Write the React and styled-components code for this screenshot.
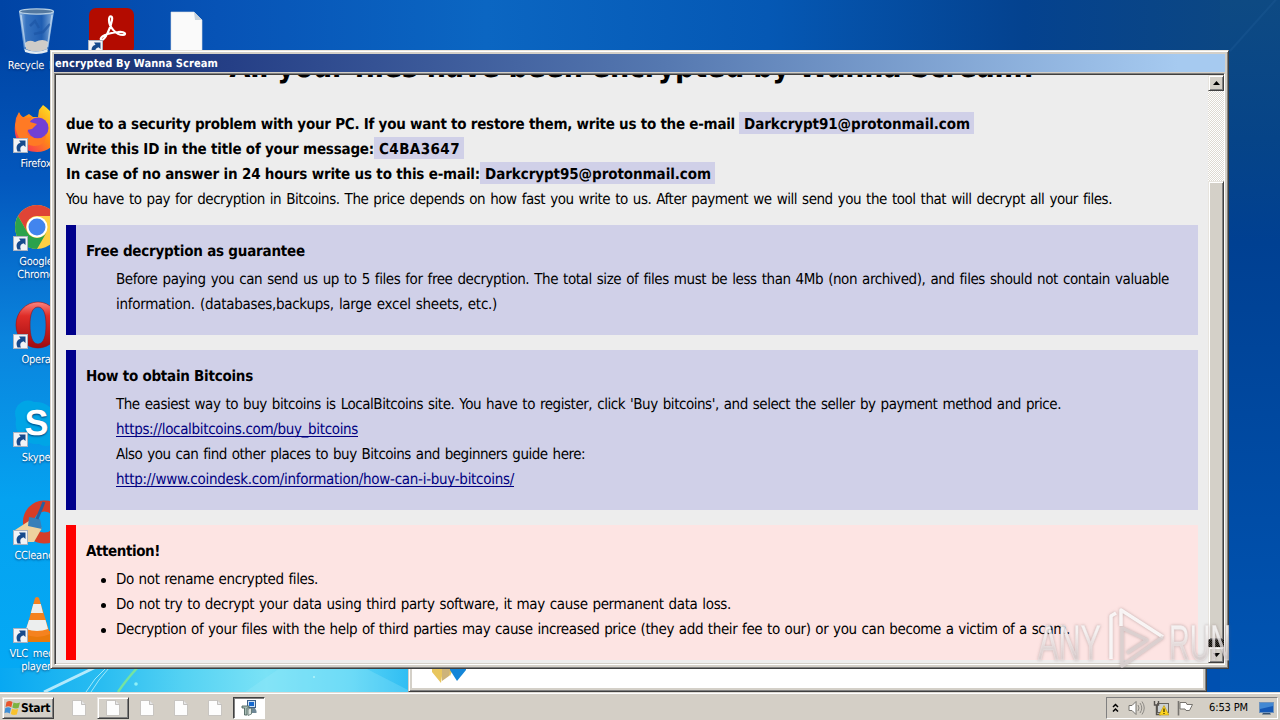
import React, { useLayoutEffect, useRef } from "react";
import styled, { createGlobalStyle, css } from "styled-components";

const Global = createGlobalStyle`
  * { box-sizing: border-box; }
  body { margin: 0; overflow: hidden; }
  ul, p, h1, h2 { margin: 0; padding: 0; }
`;

const ui = `"DejaVu Sans Condensed", "DejaVu Sans", sans-serif`;

const Desktop = styled.div`
  position: relative;
  width: 1280px;
  height: 720px;
  display: flex;
  flex-direction: column;
  overflow: hidden;
  font-family: ${ui};
  font-stretch: condensed;
  text-rendering: geometricPrecision;
  background: #0050b0;
`;

const Workspace = styled.main`
  position: relative;
  flex: 1;
  overflow: hidden;
`;

const Wallpaper = styled.svg`
  position: absolute;
  inset: 0;
`;

const IconColumns = styled.div`
  position: relative;
  display: flex;
  padding-top: 7px;
`;

const IconColumn = styled.div`
  width: 75px;
  padding-right: 3px;
  display: flex;
  flex-direction: column;
`;

const Shortcut = styled.div`
  height: 98px;
  display: flex;
  flex-direction: column;
  align-items: center;
  gap: 4px;
  color: #fff;
  font-size: 11px;
  line-height: 13px;
  text-align: center;
  white-space: pre;
  letter-spacing: -0.25px;
  word-spacing: 2px;
  text-shadow: 0 1px 2px rgba(0, 20, 70, 0.7);
  svg { flex: none; display: block; }
`;

const frame = css`
  border: 1px solid;
  border-color: #e8e4dc #404040 #404040 #d4d0c8;
  box-shadow: inset 1px 1px #fff, inset -1px -1px #808080;
  background: #d4d0c8;
`;

const BackWindow = styled.section`
  ${frame}
  position: absolute;
  left: 408px;
  top: 560px;
  width: 799px;
  height: 132px;
  padding: 3px;
  display: flex;
`;

const BackBody = styled.div`
  flex: 1;
  background: #fff;
  display: flex;
  align-items: flex-end;
  padding: 0 0 5px 20px;
`;

const MainWindow = styled.section`
  ${frame}
  position: absolute;
  left: 50px;
  top: 50px;
  width: 1179px;
  height: 619px;
  padding: 3px;
  display: flex;
  flex-direction: column;
`;

const TitleBar = styled.header`
  height: 18px;
  flex: none;
  padding: 1px 0 0 1px;
  display: flex;
  align-items: center;
  background: linear-gradient(90deg, #15306f, #253f86 15%, #5578b0 52%, #a6caf0 96%);
  color: #fff;
  font-size: 11px;
  font-weight: 700;
  line-height: 18px;
`;

const Client = styled.div`
  flex: 1;
  min-height: 0;
  margin-top: 1px;
  display: flex;
  border: 1px solid;
  border-color: #808080 #fff #fff #808080;
  box-shadow: inset 1px 1px #404040, inset -1px -1px #d4d0c8;
  padding: 1px 0 1px 1px;
`;

const Page = styled.article`
  flex: 1;
  overflow: hidden;
  background: #ededed;
  padding: 0 10px;
  color: #000;
  font-size: 15px;
  line-height: 25px;
`;

const Heading = styled.h1`
  height: 36px;
  margin-top: -25px;
  text-align: center;
  font-size: 30px;
  line-height: 36px;
`;

const Intro = styled.div`
  margin: 26px 0 -2px;
`;

const Line = styled.p`
  height: 25px;
  display: flex;
  align-items: center;
  white-space: nowrap;
  font-weight: ${(p) => (p.$bold ? 700 : 400)};
  word-spacing: ${(p) => (p.$bold ? 0 : 1.2)}px;
`;

const Mark = styled.span`
  height: 22px;
  line-height: 24px;
  padding: 0 4px 0 5px;
  margin: -3px 0 0 ${(p) => p.$gap || 0}px;
  background: #d0d0e8;
`;

const Notice = styled.section`
  height: ${(p) => p.$height}px;
  margin-top: 15px;
  padding: 14px 10px 0;
  border-left: 10px solid ${(p) => (p.$alert ? "#f00" : "#00008b")};
  background: ${(p) => (p.$alert ? "#fde4e3" : "#d0d0e8")};
`;

const NoticeTitle = styled.h2`
  height: 28px;
  font-size: 15px;
  line-height: 25px;
`;

const NoticeBody = styled.div`
  padding-left: 30px;
`;

const Bullets = styled.ul`
  list-style: none;
  padding-left: 15px;
`;

const Bullet = styled.li`
  height: 25px;
  display: flex;
  align-items: center;
  gap: 10px;
  word-spacing: 0.8px;
  &::before {
    content: "";
    width: 5px;
    height: 5px;
    margin-top: 2px;
    border-radius: 50%;
    background: #000;
  }
`;

const Fitted = styled.span`
  display: inline-block;
  white-space: pre;
`;

const Link = styled.a`
  color: #000080;
  ${Fitted} {
    text-decoration: underline;
    text-underline-offset: 2px;
    text-decoration-thickness: 1px;
    text-decoration-skip-ink: none;
  }
`;

/* Spreads a run of text over a fixed advance by adjusting its tracking. */
function Fit({ w, children }) {
  const ref = useRef(null);
  useLayoutEffect(() => {
    const el = ref.current;
    el.style.letterSpacing = "0px";
    const natural = el.getBoundingClientRect().width;
    el.style.letterSpacing = `${(w - natural) / el.textContent.length}px`;
  }, [w, children]);
  return <Fitted ref={ref}>{children}</Fitted>;
}

const ScrollBar = styled.div`
  width: 16px;
  display: flex;
  flex-direction: column;
  background: repeating-conic-gradient(#fff 0 25%, #dedad2 0 50%) 0 0 / 2px 2px;
`;

const bevel = css`
  border: 1px solid;
  border-color: #e8e5df #404040 #404040 #e8e5df;
  box-shadow: inset 1px 1px #fff, inset -1px -1px #808080;
  background: #d4d0c8;
`;

const ScrollButton = styled.div`
  ${bevel}
  height: 16px;
  flex: none;
  display: flex;
  align-items: center;
  justify-content: center;
`;

const ScrollGap = styled.div`
  height: 90px;
  flex: none;
`;

const Thumb = styled.div`
  ${bevel}
  flex: 1;
`;

const Pressed = styled.div`
  height: 7px;
  flex: none;
  background: repeating-conic-gradient(#000 0 25%, #3b382f 0 50%) 0 0 / 2px 2px;
`;

const Taskbar = styled.footer`
  height: 28px;
  flex: none;
  display: flex;
  align-items: center;
  padding: 2px 0 0 2px;
  background: #d4cfc6;
  border-top: 1px solid #dedbd5;
  box-shadow: inset 0 1px #fff;
  color: #000;
`;

const StartButton = styled.div`
  ${bevel}
  width: 52px;
  height: 22px;
  padding-left: 1px;
  display: flex;
  align-items: center;
  font-size: 12px;
  font-weight: 700;
`;

const Tasks = styled.nav`
  flex: 1;
  display: flex;
  gap: 2px;
  padding-left: 9px;
`;

const Task = styled.div`
  width: 32px;
  height: 22px;
  display: flex;
  align-items: center;
  justify-content: center;
  ${(p) => p.$state === "raised" && bevel}
  ${(p) =>
    p.$state === "active" &&
    css`
      border: 1px solid;
      border-color: #404040 #fff #fff #404040;
      box-shadow: inset 1px 1px #808080;
      background: #fff;
    `}
`;

const Tray = styled.div`
  width: 172px;
  height: 22px;
  margin-right: 2px;
  padding: 0 1px 0 4px;
  display: flex;
  align-items: center;
  border: 1px solid;
  border-color: #808080 #fff #fff #808080;
`;

const TrayIcons = styled.div`
  display: flex;
  align-items: center;
  gap: 8px;
  svg { display: block; }
`;

const Clock = styled.span`
  margin: 0 11px 0 15px;
  font-size: 11px;
`;

const Watermark = styled.div`
  position: absolute;
  left: 1038px;
  top: 606px;
  width: 194px;
  height: 66px;
  svg { display: block; filter: drop-shadow(0 0 1.5px rgba(120, 100, 100, 0.55)); }
`;

const Arrow = () => (
  <g>
    <rect x="1.5" y="33.5" width="14" height="14" fill="#f2f3f6" stroke="#aab2c0" />
    <path d="M5.500 46.500C3.500 42 5 38.500 8.500 37.800L7 35.500H13.500V42L11.500 40.200C8.500 41 7.500 43.500 9 46.500Z" fill="#174a8c" />
  </g>
);

const Icon = ({ children, arrow = true }) => (
  <svg width="48" height="48" viewBox="0 0 48 48" overflow="visible">
    {children}
    {arrow && <Arrow />}
  </svg>
);

const RecycleBin = () => (
  <Icon arrow={false}>
    <defs>
      <linearGradient id="bin">
        <stop offset="0" stopColor="#b9d5ef" stopOpacity=".9" />
        <stop offset=".2" stopColor="#4a83c8" stopOpacity=".75" />
        <stop offset=".65" stopColor="#2c67b5" stopOpacity=".7" />
        <stop offset="1" stopColor="#a9cbec" stopOpacity=".9" />
      </linearGradient>
    </defs>
    <path d="M7 4L12 43Q24 50 36 43L42 4Z" fill="url(#bin)" />
    <path d="M13 36Q17 32 23 35Q31 31 36 35L35 42Q24 47 14 42Z" fill="#cfccc8" />
    <path d="M12.500 42Q24 47 35.500 42V45Q24 49 13 45Z" fill="#e3ecf2" />
    <path d="M18 19L23 14L27 21M38 17L31 25L22 27" fill="none" stroke="#1d56a5" strokeWidth="2.500" opacity=".7" />
    <ellipse cx="24.500" cy="4.500" rx="17" ry="2.600" fill="#53789f" stroke="#b4cde2" strokeWidth="1.200" />
    <path d="M9 8L13.500 40M40 8L35.500 40" stroke="#d9eaf8" strokeWidth="1.500" opacity=".6" />
  </Icon>
);

const Acrobat = () => (
  <Icon>
    <rect x="2" y="1" width="45" height="46" rx="7" fill="#b30b00" />
    <path
      d="M14 33C12 30 20 26 31 25C38 24 40 28 36 28C29 28 22 20 22 13C22 8 26 8 25 13C24 20 18 34 14 33Z"
      fill="none"
      stroke="#fff"
      strokeWidth="2.200"
    />
  </Icon>
);

const Paper = () => (
  <Icon arrow={false}>
    <path d="M9 5H32L40 13V48H9Z" fill="#fafafa" stroke="#d7dbe0" strokeWidth=".6" />
    <path d="M32 5L33 13H40Z" fill="#c9d3dc" />
  </Icon>
);

const Firefox = () => (
  <Icon>
    <defs>
      <linearGradient id="fox" x1="1" y1="0" x2="0" y2="1">
        <stop offset=".1" stopColor="#ffe226" />
        <stop offset=".5" stopColor="#ff8a16" />
        <stop offset="1" stopColor="#f5156c" />
      </linearGradient>
    </defs>
    <path
      d="M3 20L4 13L7 7L10 13L17 9L21 12L26 12L27 5L31 0C41 7 47 17 46 29C44 40 36 47 25 47C11 47 1 36 3 20Z"
      fill="url(#fox)"
    />
    <circle cx="26" cy="23" r="10.500" fill="#7140d5" />
    <path d="M3 20L7 8Q10 13 15 13L20 12L18 17L25 19L20 24L15 25Q14 31 22 33Q30 35 34 29Q34 41 22 41Q5 39 3 20Z" fill="#ff7a24" />
  </Icon>
);

const Chrome = () => (
  <Icon>
    <g transform="translate(1 2)">
      <circle cx="24" cy="22" r="22" fill="#ffd044" />
      <path d="M5 11A22 22 0 0 1 43 11H24A11 11 0 0 0 14.500 27.500Z" fill="#df4436" />
      <path d="M5 11L14.500 27.500A11 11 0 0 0 33.500 27.500L24 44A22 22 0 0 1 5 11Z" fill="#2ba24c" />
      <circle cx="24" cy="22" r="10.500" fill="#fff" />
      <circle cx="24" cy="22" r="8.500" fill="#4285ee" />
    </g>
  </Icon>
);

const Opera = () => (
  <Icon>
    <defs>
      <linearGradient id="op" x1="0" y1="0" x2="0" y2="1">
        <stop offset="0" stopColor="#f98580" />
        <stop offset=".3" stopColor="#df2d28" />
        <stop offset="1" stopColor="#9e0b10" />
      </linearGradient>
    </defs>
    <path
      transform="translate(1 1)"
      fillRule="evenodd"
      d="M25 0C37 0 46 10 46 23S37 46 25 46S3 36 3 23S13 0 25 0ZM25 5C19 5 17 13 17 23S19 42 25 42S33 33 33 23S31 5 25 5Z"
      fill="url(#op)"
      stroke="#971116"
      strokeWidth=".6"
    />
  </Icon>
);

const SkypeMark = styled.text`
  font: 700 36px "Liberation Sans", sans-serif;
`;

const Skype = () => (
  <Icon>
    <path d="M3 15A13 13 0 0 1 22 3A21 21 0 0 1 45 27A13 13 0 0 1 27 45A21 21 0 0 1 4 20Z" fill="#00a5e6" />
    <SkypeMark x="12.500" y="36" fill="#fff">S</SkypeMark>
  </Icon>
);

const CCleaner = () => (
  <Icon>
    <path d="M43 13A16 16 0 1 0 43 37" fill="none" stroke="#d63d27" strokeWidth="11" />
    <path d="M3 33L20 22L30 31L22 45H9Z" fill="#eed19f" />
    <path d="M17 20L28 22L30 32L16 29Z" fill="#377fb9" />
    <path d="M25 22L32 5" stroke="#27609f" strokeWidth="3" />
  </Icon>
);

const Vlc = () => (
  <Icon>
    <path d="M14 36H38L44 47H10Z" fill="#e97a0c" />
    <path d="M23 3Q25 1 27 3L38 39Q25 45 13 39Z" fill="#f5821f" />
    <path d="M21.300 9H28.800L31 18H18.800ZM17 25H33.500L36 34Q25 38 14 34Z" fill="#eceeee" />
  </Icon>
);

const WinFlag = () => (
  <svg width="17" height="16" viewBox="0 0 16 16">
    <path d="M2 2Q5 0 8 2L6.800 7.200Q4 5.500 1 7Z" fill="#e8542b" />
    <path d="M9 2.500Q12 4 15.500 2.500L14 8Q11 9 7.800 7.500Z" fill="#7cb342" />
    <path d="M.8 8Q4 6.500 6.500 8.200L5.300 13.500Q3 12 0 13Z" fill="#3f8fd6" />
    <path d="M7.500 8.700Q10.500 10 13.700 9L12.300 14.500Q9 15.500 6.300 14Z" fill="#f9c22e" />
  </svg>
);

const PaperSmall = () => (
  <svg width="14" height="16" viewBox="0 0 14 16">
    <path d="M.5.500H9.500L13.500 4.500V15.500H.5Z" fill="#fdfdfd" stroke="#bfbdb9" strokeWidth=".8" />
    <path d="M9.500.500V4.500H13.500" fill="#e7e7e7" stroke="#b5b3b0" strokeWidth=".8" />
  </svg>
);

const Installer = () => (
  <svg width="16" height="16" viewBox="0 0 16 16">
    <rect x="6.500" y=".5" width="8" height="7" fill="#cfe2f4" stroke="#3d5f88" />
    <rect x="8" y="2" width="5" height="4" fill="#1769cf" />
    <path d="M10 8H14L15.500 11V13H10Z" fill="#6e8796" />
    <path d="M1 6H8V8H6V15H3.500V8H1Z" fill="#a9bdb5" stroke="#4e6561" strokeWidth=".9" />
    <path d="M7 9L10.500 8V14L7 15.500Z" fill="#dfe6e2" stroke="#58716b" strokeWidth=".8" />
  </svg>
);

const Glyph = ({ down }) => (
  <svg width="7" height="4" viewBox="0 0 7 4">
    <path d={down ? "M0 0H7L3.500 4Z" : "M0 4H7L3.500 0Z"} fill="#000" />
  </svg>
);

const desktopColumns = [
  [
    [RecycleBin, "Recycle Bin"],
    [Firefox, "Firefox"],
    [Chrome, "Google\nChrome"],
    [Opera, "Opera"],
    [Skype, "Skype"],
    [CCleaner, "CCleaner"],
    [Vlc, "VLC media\nplayer"],
  ],
  [[Acrobat, ""]],
  [[Paper, ""]],
];

const BrandText = styled.text`
  font: 400 50px "Liberation Sans", sans-serif;
`;

export default function App() {
  return (
    <>
      <Global />
      <Desktop>
        <Workspace>
          <Wallpaper width="1280" height="692" viewBox="0 0 1280 692">
            <defs>
              <linearGradient id="left" x1="0" y1="0" x2="0" y2="1">
                <stop offset="0" stopColor="#0046a6" />
                <stop offset=".2" stopColor="#0357bd" />
                <stop offset=".45" stopColor="#0a84dd" />
                <stop offset=".7" stopColor="#05a2f0" />
                <stop offset="1" stopColor="#04aaf5" />
              </linearGradient>
              <linearGradient id="top">
                <stop offset="0" stopColor="#0044a5" />
                <stop offset=".17" stopColor="#0753b6" />
                <stop offset=".38" stopColor="#0b66c2" />
                <stop offset=".6" stopColor="#0558b4" />
                <stop offset=".8" stopColor="#04428f" />
                <stop offset="1" stopColor="#0e4880" />
              </linearGradient>
              <linearGradient id="right" x1="0" y1="0" x2="0" y2="1">
                <stop offset="0" stopColor="#0e4a83" />
                <stop offset=".2" stopColor="#064488" />
                <stop offset=".35" stopColor="#004092" />
                <stop offset="1" stopColor="#0055b4" />
              </linearGradient>
              <linearGradient id="bottom" gradientUnits="userSpaceOnUse" x1="0" y1="0" x2="410" y2="0">
                <stop offset="0" stopColor="#08a8f2" />
                <stop offset=".25" stopColor="#2abdf1" />
                <stop offset=".45" stopColor="#55d2f3" />
                <stop offset=".65" stopColor="#7ae2f6" />
                <stop offset=".85" stopColor="#5dd6f6" />
                <stop offset="1" stopColor="#2fbdf3" />
              </linearGradient>
            </defs>
            <rect width="1280" height="60" fill="url(#top)" />
            <rect y="50" width="60" height="642" fill="url(#left)" />
            <rect x="1220" width="60" height="692" fill="url(#right)" />
            <rect y="668" width="410" height="24" fill="url(#bottom)" />
            <path d="M1230 51L1280 -5" stroke="#23609c" strokeWidth="2" opacity=".3" />
            <path d="M44 692L98 666" stroke="#d8f7ff" strokeWidth="3" opacity=".8" />
            <path d="M86 692Q94 678 106 668M91 692Q98 680 109 668" fill="none" stroke="#bff2fb" opacity=".8" />
            <path d="M118 692Q126 680 138 667" fill="none" stroke="#75e3a0" strokeWidth="2.500" />
            <path d="M245 692L280 668H365L408 690V692Z" fill="#a0ecfa" opacity=".25" />
            <circle cx="136" cy="684" r="1.800" fill="#8ff0f7" />
            <circle cx="314" cy="677" r="1" fill="#b5f5fa" />
          </Wallpaper>
          <IconColumns>
            {desktopColumns.map((column, i) => (
              <IconColumn key={i}>
                {column.map(([Art, label], j) => (
                  <Shortcut key={j}>
                    <Art />
                    {label}
                  </Shortcut>
                ))}
              </IconColumn>
            ))}
          </IconColumns>

          <BackWindow>
            <BackBody>
              <svg width="36" height="26" viewBox="0 0 36 26">
                <path d="M0 0V15L9 26L11 12L18 19L24 6V0Z" fill="#e8c65e" />
                <path d="M10 0V24L17 19L20 0Z" fill="#cdb37a" />
                <path d="M18 13L25 24L34 13V0H18Z" fill="#1486d8" />
              </svg>
            </BackBody>
          </BackWindow>

          <MainWindow>
            <TitleBar>
              <Fit w={163}>encrypted By Wanna Scream</Fit>
            </TitleBar>
            <Client>
              <Page>
                <Heading>
                  <Fit w={804}>All your files have been encrypted by Wanna Scream!</Fit>
                </Heading>
                <Intro>
                  <Line $bold>
                    <Fit w={669}>
                      due to a security problem with your PC. If you want to restore them, write us to the e-mail
                    </Fit>
                    <Mark $gap={4}>
                      <Fit w={226}>Darkcrypt91@protonmail.com</Fit>
                    </Mark>
                  </Line>
                  <Line $bold>
                    <Fit w={308}>Write this ID in the title of your message:</Fit>
                    <Mark>
                      <Fit w={81}>C4BA3647</Fit>
                    </Mark>
                  </Line>
                  <Line $bold>
                    <Fit w={414}>In case of no answer in 24 hours write us to this e-mail:</Fit>
                    <Mark>
                      <Fit w={226}>Darkcrypt95@protonmail.com</Fit>
                    </Mark>
                  </Line>
                  <Line>
                    <Fit w={1046}>
                      You have to pay for decryption in Bitcoins. The price depends on how fast you write to us. After payment we will send you the tool that will decrypt all your files.
                    </Fit>
                  </Line>
                </Intro>

                <Notice $height={110}>
                  <NoticeTitle>
                    <Fit w={219}>Free decryption as guarantee</Fit>
                  </NoticeTitle>
                  <NoticeBody>
                    <Line>
                      <Fit w={1053}>
                        Before paying you can send us up to 5 files for free decryption. The total size of files must be less than 4Mb (non archived), and files should not contain valuable
                      </Fit>
                    </Line>
                    <Line>
                      <Fit w={381}>information. (databases,backups, large excel sheets, etc.)</Fit>
                    </Line>
                  </NoticeBody>
                </Notice>

                <Notice $height={160}>
                  <NoticeTitle>
                    <Fit w={167}>How to obtain Bitcoins</Fit>
                  </NoticeTitle>
                  <NoticeBody>
                    <Line>
                      <Fit w={945}>
                        The easiest way to buy bitcoins is LocalBitcoins site. You have to register, click 'Buy bitcoins', and select the seller by payment method and price.
                      </Fit>
                    </Line>
                    <Line>
                      <Link>
                        <Fit w={242}>https://localbitcoins.com/buy_bitcoins</Fit>
                      </Link>
                    </Line>
                    <Line>
                      <Fit w={469}>Also you can find other places to buy Bitcoins and beginners guide here:</Fit>
                    </Line>
                    <Line>
                      <Link>
                        <Fit w={398}>http://www.coindesk.com/information/how-can-i-buy-bitcoins/</Fit>
                      </Link>
                    </Line>
                  </NoticeBody>
                </Notice>

                <Notice $height={135} $alert>
                  <NoticeTitle>
                    <Fit w={74}>Attention!</Fit>
                  </NoticeTitle>
                  <Bullets>
                    <Bullet>
                      <Fit w={202}>Do not rename encrypted files.</Fit>
                    </Bullet>
                    <Bullet>
                      <Fit w={615}>
                        Do not try to decrypt your data using third party software, it may cause permanent data loss.
                      </Fit>
                    </Bullet>
                    <Bullet>
                      <Fit w={954}>
                        Decryption of your files with the help of third parties may cause increased price (they add their fee to our) or you can become a victim of a scam.
                      </Fit>
                    </Bullet>
                  </Bullets>
                </Notice>
              </Page>
              <ScrollBar>
                <ScrollButton>
                  <Glyph />
                </ScrollButton>
                <ScrollGap />
                <Thumb />
                <Pressed />
                <ScrollButton>
                  <Glyph down />
                </ScrollButton>
              </ScrollBar>
            </Client>
          </MainWindow>
        </Workspace>

        <Taskbar>
          <StartButton>
            <WinFlag />
            <Fit w={29}>Start</Fit>
          </StartButton>
          <Tasks>
            <Task><PaperSmall /></Task>
            <Task $state="raised"><PaperSmall /></Task>
            <Task><PaperSmall /></Task>
            <Task><PaperSmall /></Task>
            <Task><PaperSmall /></Task>
            <Task $state="active"><Installer /></Task>
          </Tasks>
          <Tray>
            <TrayIcons>
              <svg width="9" height="10" viewBox="0 0 9 10">
                <path d="M2 4L4.500 1.500L7 4M2 8.500L4.500 6L7 8.500" fill="none" stroke="#000" strokeWidth="1.500" />
              </svg>
              <svg width="17" height="16" viewBox="0 0 17 16">
                <path d="M1 5.500H4L8 1.500V14.500L4 10.500H1Z" fill="#fff" stroke="#77746f" />
                <path d="M10 5Q12 8 10 11M12 3Q15.500 8 12 13M14 1.500Q18.500 8 14 14.500" fill="none" stroke="#8c8984" />
              </svg>
              <svg width="16" height="16" viewBox="0 0 16 16">
                <rect x="4.500" y="3.500" width="11" height="9" fill="#cbd0d2" stroke="#66635e" />
                <path d="M1.500 1V5H5.500V1M3.500 5V14.500H8" fill="none" stroke="#55524d" strokeWidth="1.400" />
                <path d="M11 5.500L16 15H6Z" fill="#ffd51f" stroke="#b79413" strokeWidth=".6" />
                <path d="M11 8.500V12M11 13V14" stroke="#332900" strokeWidth="1.200" />
              </svg>
              <svg width="17" height="16" viewBox="0 0 17 16">
                <path d="M1.500 1V15.500" stroke="#77746f" strokeWidth="1.600" />
                <path d="M3 2.500H9L10 4.500H15.500L12.500 10.500H9L8 9H3Z" fill="#fff" stroke="#77746f" />
              </svg>
            </TrayIcons>
            <Clock>
              <Fit w={39}>6:53 PM</Fit>
            </Clock>
            <svg width="16" height="14" viewBox="0 0 16 14">
              <rect x=".5" y="1.500" width="14" height="10" fill="#1558b5" stroke="#6f93bd" />
              <path d="M1 2H14V5L1 8Z" fill="#4288d3" />
              <path d="M4 12H11L12 13.500H3Z" fill="#35506d" />
            </svg>
          </Tray>
        </Taskbar>

        <Watermark>
          <svg width="194" height="66" viewBox="0 0 194 66">
            <defs>
              <linearGradient id="brand" x1="0" y1="0" x2="0" y2="1">
                <stop offset=".3" stopColor="#fff" stopOpacity=".8" />
                <stop offset=".75" stopColor="#dcd5d5" stopOpacity=".65" />
              </linearGradient>
            </defs>
            <g fill="url(#brand)" stroke="#eee8e8" strokeOpacity=".5" strokeWidth="1">
              <BrandText x="0" y="54" textLength="63" lengthAdjust="spacingAndGlyphs">ANY</BrandText>
              <BrandText x="131" y="54" textLength="62" lengthAdjust="spacingAndGlyphs">RUN</BrandText>
            </g>
            <g fill="none" strokeLinejoin="round">
              <path d="M73 53V10L78 7M83 20V4L125 31" stroke="#fff" strokeOpacity=".85" strokeWidth="3.500" />
              <path d="M125 31L84 60V22L109 34L89 47" stroke="#ddd5d5" strokeOpacity=".8" strokeWidth="3.500" />
            </g>
          </svg>
        </Watermark>
      </Desktop>
    </>
  );
}
